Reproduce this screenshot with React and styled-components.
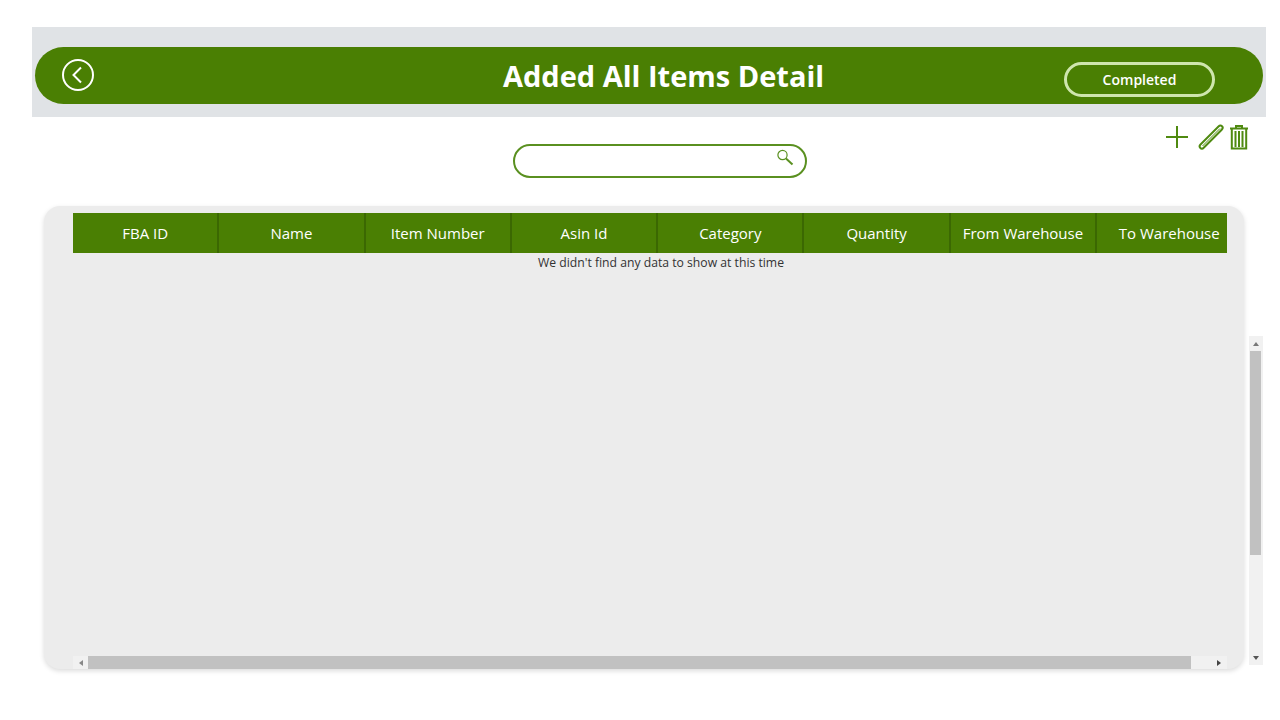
import React from "react";
import styled, { createGlobalStyle } from "styled-components";

const GlobalStyle = createGlobalStyle`
  html, body {
    margin: 0;
    padding: 0;
    background: #fff;
    font-family: "Open Sans", "Noto Sans", sans-serif;
  }
`;

const columns = ["FBA ID", "Name", "Item Number", "Asin Id", "Category", "Quantity", "From Warehouse", "To Warehouse"];

const App = () => {
  return (
    <Page>
      <GlobalStyle />
      <HeaderBand>
        <HeaderPill>
          <BackButton aria-label="Back">
            <svg width="34" height="34" viewBox="0 0 34 34" fill="none" stroke="#fff" strokeWidth="2">
              <circle cx="17" cy="17" r="15" />
              <path d="M20 9.5 L12.5 17 L20 24.5" />
            </svg>
          </BackButton>
          <Title>Added All Items Detail</Title>
          <StatusBadge>Completed</StatusBadge>
        </HeaderPill>
      </HeaderBand>

      <SearchRow>
        <SearchBox>
          <svg width="18" height="18" viewBox="0 0 18 18" fill="none" stroke="#5a9020">
            <circle cx="6.5" cy="6" r="4.6" strokeWidth="1.2" />
            <path d="M10 9.5 L16.5 15.5" strokeWidth="2" />
          </svg>
        </SearchBox>
        <Actions>
          <svg width="29" height="26" viewBox="0 0 29 26" stroke="#4f8a10" strokeWidth="2">
            <path d="M13 2 V24 M2 13 H24" />
          </svg>
          <svg width="28" height="28" viewBox="0 0 28 28" fill="none" stroke="#4f8a10" strokeWidth="2">
            <path d="M3.5 21.5 L21.5 3.5 C22.8 2.2 24 2.2 25 3.2 C26 4.2 26 5.4 24.7 6.7 L6.7 24.7 C5.5 25.9 4.3 26 3.4 25 C2.4 24 2.4 22.6 3.5 21.5 Z" />
            <path d="M5.5 23 L23 5.5" strokeWidth="1" />
          </svg>
          <svg width="20" height="26" viewBox="0 0 20 26" fill="none" stroke="#4f8a10">
            <path d="M1 4.5 H19 M7 4 V2 H13 V4" strokeWidth="2" />
            <path d="M2.8 5 V24.5 H17.2 V5" strokeWidth="2" />
            <path d="M6.5 7 V23 M10 7 V23 M13.5 7 V23" strokeWidth="2" />
          </svg>
        </Actions>
      </SearchRow>

      <TableRow>
        <Card>
          <HeaderClip>
            <HeaderGrid>
              {columns.map((c) => (
                <HeaderCell key={c}>{c}</HeaderCell>
              ))}
            </HeaderGrid>
          </HeaderClip>
          <EmptyText>We didn't find any data to show at this time</EmptyText>
          <HScroll>
            <ArrowBox>
              <Arrow $dir="left" />
            </ArrowBox>
            <HThumb />
            <ArrowBox>
              <Arrow $dir="right" />
            </ArrowBox>
          </HScroll>
        </Card>
        <VScroll>
          <VArrowBox>
            <Arrow $dir="up" />
          </VArrowBox>
          <VTrack>
            <VThumb />
          </VTrack>
          <VArrowBox>
            <Arrow $dir="down" />
          </VArrowBox>
        </VScroll>
      </TableRow>
    </Page>
  );
};

const Page = styled.div`
  width: 1280px;
  height: 720px;
  padding: 27px 14px 0 32px;
  box-sizing: border-box;
  overflow: hidden;
  display: flex;
  flex-direction: column;
`;

const HeaderBand = styled.div`
  height: 90px;
  background: #e0e3e6;
  padding: 20px 3px 13px;
  box-sizing: border-box;
`;

const HeaderPill = styled.div`
  position: relative;
  height: 57px;
  border-radius: 29px;
  background: #4a7f03;
  display: flex;
  align-items: center;
  justify-content: space-between;
  padding: 0 48px 0 26px;
`;

const BackButton = styled.div`
  width: 34px;
  height: 34px;
  margin-top: -1px;
`;

const Title = styled.div`
  position: absolute;
  left: 468px;
  top: 10px;
  color: #fff;
  font-size: 29px;
  line-height: 38px;
  font-weight: 700;
  white-space: nowrap;
`;

const StatusBadge = styled.div`
  width: 151px;
  height: 35px;
  margin-top: 7px;
  box-sizing: border-box;
  border: 3px solid #cfe6ae;
  border-radius: 18px;
  color: #fff;
  font-size: 14px;
  font-weight: 600;
  display: flex;
  align-items: center;
  justify-content: center;
`;

const SearchRow = styled.div`
  position: relative;
  height: 89px;
  display: flex;
  justify-content: center;
`;

const SearchBox = styled.div`
  width: 294px;
  height: 34px;
  margin: 27px 0 0 22px;
  box-sizing: border-box;
  border: 2px solid #5a9020;
  border-radius: 17px;
  display: flex;
  justify-content: flex-end;
  padding: 3px 11px 0 0;
`;

const Actions = styled.div`
  position: absolute;
  right: 17px;
  top: 6px;
  display: flex;
  align-items: center;
  gap: 4px;
`;

const TableRow = styled.div`
  display: flex;
  align-items: flex-end;
  gap: 5px;
  padding-left: 12px;
`;

const Card = styled.div`
  position: relative;
  width: 1200px;
  height: 463px;
  box-sizing: border-box;
  background: #ececec;
  border-radius: 16px;
  box-shadow: 0 2px 5px rgba(0, 0, 0, 0.14);
  padding: 7px 17px 0 29px;
  display: flex;
  flex-direction: column;
`;

const HeaderClip = styled.div`
  overflow: hidden;
  flex: none;
`;

const HeaderGrid = styled.div`
  display: grid;
  grid-template-columns: repeat(8, 146.3px);
  height: 40px;
  background: #4a7f03;
`;

const HeaderCell = styled.div`
  display: flex;
  align-items: center;
  justify-content: center;
  color: #fff;
  font-size: 15px;
  white-space: nowrap;
  border-right: 2px solid #3b6802;
  box-sizing: border-box;
`;

const EmptyText = styled.div`
  text-align: center;
  font-size: 12.2px;
  line-height: 20px;
  color: #333;
  padding-left: 22px;
`;

const HScroll = styled.div`
  position: absolute;
  left: 29px;
  right: 17px;
  bottom: 0;
  height: 13px;
  background: #f1f1f1;
  display: flex;
  align-items: center;
`;

const ArrowBox = styled.div`
  width: 15px;
  height: 13px;
  flex: none;
  display: flex;
  align-items: center;
  justify-content: center;
  &:last-child {
    margin-left: auto;
    margin-right: 1px;
  }
`;

const HThumb = styled.div`
  width: 1103px;
  height: 13px;
  background: #c1c1c1;
`;

const VScroll = styled.div`
  width: 14px;
  height: 329px;
  margin-bottom: 4px;
  background: #f1f1f1;
  display: flex;
  flex-direction: column;
`;

const VArrowBox = styled.div`
  height: 15px;
  flex: none;
  display: flex;
  align-items: center;
  justify-content: center;
`;

const VTrack = styled.div`
  flex: 1;
`;

const VThumb = styled.div`
  height: 204px;
  margin: 0 2px 0 1px;
  background: #c1c1c1;
`;

const arrowBorders = {
  up: "border-width: 0 3px 4px; border-color: transparent transparent #777;",
  down: "border-width: 4px 3px 0; border-color: #555 transparent transparent;",
  left: "border-width: 3px 4px 3px 0; border-color: transparent #888 transparent transparent;",
  right: "border-width: 3px 0 3px 4px; border-color: transparent transparent transparent #444;",
};

const Arrow = styled.span`
  display: block;
  width: 0;
  height: 0;
  border-style: solid;
  ${(p) => arrowBorders[p.$dir]}
`;

export default App;
